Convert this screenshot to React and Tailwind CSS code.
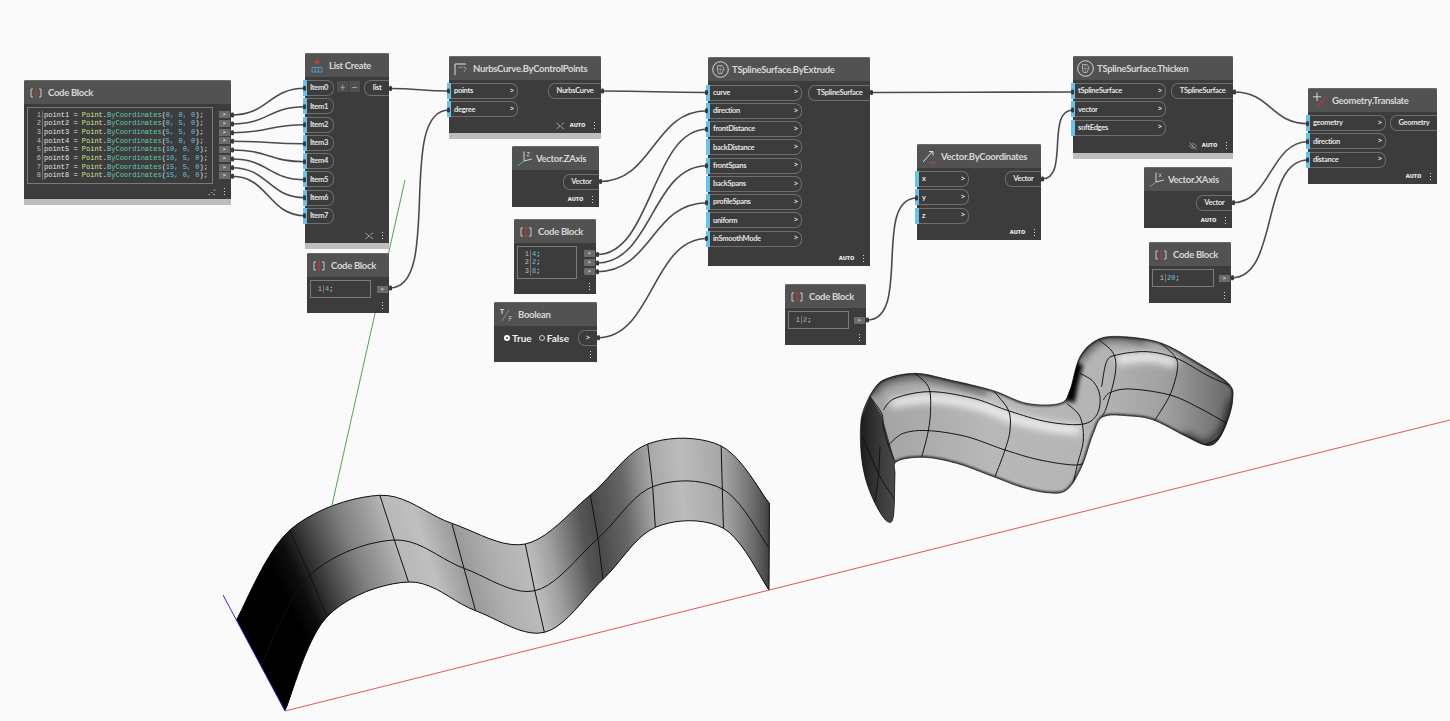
import React from "react";
import { EyeOff } from "lucide-react";

// catmull-rom through a list of points
const pointAt = (pts, u) => {
  const i = Math.min(Math.floor(u), pts.length - 2);
  const t = u - i;
  const p0 = pts[Math.max(i - 1, 0)];
  const p1 = pts[i];
  const p2 = pts[i + 1];
  const p3 = pts[Math.min(i + 2, pts.length - 1)];
  const f = (a, b, c, d) =>
    0.5 * (2 * b + (c - a) * t + (2 * a - 5 * b + 4 * c - d) * t * t + (3 * b - a - 3 * c + d) * t * t * t);
  return [f(p0[0], p1[0], p2[0], p3[0]), f(p0[1], p1[1], p2[1], p3[1])];
};

const smooth = (pts, close = false) => {
  const steps = (pts.length - 1) * 10;
  let d = "";
  for (let s = 0; s <= steps; s++) {
    const [x, y] = pointAt(pts, (s / steps) * (pts.length - 1));
    d += `${s === 0 ? "M" : "L"}${x.toFixed(1)} ${y.toFixed(1)} `;
  }
  return close ? d + "Z" : d;
};

// open surface: knots read off the picture, in zoomed coords
const toScreen = ([x, y]) => [200 + x * 0.38265, 420 + y / 3];
const topEdge = [[95, 600], [235, 330], [470, 226], [658, 310], [850, 372], [1020, 225], [1170, 72], [1362, 78], [1488, 250]].map(toScreen);
const midEdge = [[160, 735], [287, 465], [508, 360], [690, 445], [875, 512], [1040, 355], [1183, 200], [1365, 207], [1487, 383]].map(toScreen);
const lowEdge = [[222, 873], [332, 590], [545, 486], [720, 572], [900, 637], [1053, 478], [1190, 322], [1368, 325], [1487, 510]].map(toScreen);

const shadeStops = [
  [0, 0], [0.65, 0], [0.85, 14], [1, 40], [1.5, 128], [2, 184], [2.4, 192], [3, 154], [3.5, 176], [4, 188],
  [4.3, 160], [4.8, 85], [5, 74], [5.5, 102], [6, 168], [6.4, 188], [7, 165], [7.5, 112], [8, 60],
];

const shade = (u) => {
  for (let i = 0; i < shadeStops.length - 1; i++) {
    const [a, va] = shadeStops[i];
    const [b, vb] = shadeStops[i + 1];
    if (u <= b) {
      const v = Math.round(va + ((vb - va) * (u - a)) / (b - a));
      return `rgb(${v},${v},${v})`;
    }
  }
  return "rgb(60,60,60)";
};

// strips overlap the next one so no seam shows through
const strips = [];
for (let s = 0; s < 200; s++) {
  const u0 = (s / 200) * 8;
  const u1 = Math.min(((s + 3) / 200) * 8, 8);
  const a = pointAt(topEdge, u0);
  const b = pointAt(topEdge, u1);
  const c = pointAt(lowEdge, u1);
  const d = pointAt(lowEdge, u0);
  strips.push({ pts: [a, b, c, d].map((p) => p.join(",")).join(" "), fill: shade(u0) });
}

const OpenSurface = () => (
  <g>
    {strips.map((s, i) => (
      <polygon key={i} points={s.pts} fill={s.fill} />
    ))}
    <g fill="none" stroke="#111" strokeWidth="1">
      <path d={smooth(topEdge)} />
      <path d={smooth(midEdge)} />
      <path d={smooth(lowEdge)} />
      {topEdge.slice(1, 8).map((p, i) => (
        <path key={i} d={`M${p[0]} ${p[1]} L${midEdge[i + 1][0]} ${midEdge[i + 1][1]} L${lowEdge[i + 1][0]} ${lowEdge[i + 1][1]}`} />
      ))}
      <path d={`M${topEdge[8][0]} ${topEdge[8][1]} L${lowEdge[8][0]} ${lowEdge[8][1]}`} />
    </g>
  </g>
);

const blobOutline = [
  [90, 225], [130, 180], [225, 160], [330, 180], [460, 212], [560, 250], [660, 250], [690, 210], [720, 110], [775, 58],
  [850, 50], [960, 68], [1060, 120], [1165, 190], [1178, 240], [1160, 310], [1130, 365], [1095, 375], [1030, 345],
  [940, 300], [870, 288], [790, 290], [760, 340], [725, 440], [680, 510], [620, 518], [540, 500], [460, 470], [350, 430],
  [250, 412], [170, 425], [165, 470], [160, 590], [140, 603], [105, 550], [75, 470], [62, 380], [65, 290], [90, 225],
];
const blobPath = smooth(blobOutline, true);

const blobLines = [
  [[130, 270], [165, 235], [270, 215], [400, 235], [505, 272], [620, 305], [725, 313], [770, 285], [780, 230], [760, 185], [720, 160]],
  [[785, 200], [800, 125], [830, 105], [920, 95], [1010, 115], [1100, 165], [1165, 195]],
  [[145, 375], [190, 340], [265, 332], [380, 350], [495, 390], [600, 420], [710, 435], [750, 415]],
  [[790, 240], [810, 218], [870, 207], [990, 225], [1080, 265], [1160, 310]],
  [[225, 160], [265, 200], [272, 260], [265, 332], [245, 412]],
  [[460, 212], [505, 270], [510, 330], [495, 390], [465, 470]],
  [[680, 250], [720, 290], [730, 360], [712, 435], [695, 510]],
  [[775, 58], [820, 100], [826, 160], [800, 260], [785, 290]],
  [[960, 68], [1005, 110], [1012, 150], [990, 225], [945, 300]],
  [[1095, 375], [1140, 350], [1160, 310]],
  [[90, 230], [125, 280], [130, 320], [145, 375], [165, 425]],
  [[68, 350], [115, 460], [165, 540]],
  [[120, 380], [115, 470], [105, 545]],
];

const ThickSurface = () => (
  <g transform="translate(840 320) scale(0.3333)">
    <defs>
      <clipPath id="blob-clip">
        <path d={blobPath} />
      </clipPath>
      <linearGradient id="blob-base" x1="0" y1="0" x2="1" y2="0">
        <stop offset="0" stopColor="#a0a0a0" />
        <stop offset="0.35" stopColor="#b8b8b8" />
        <stop offset="0.65" stopColor="#b4b4b4" />
        <stop offset="0.82" stopColor="#a0a0a0" />
        <stop offset="1" stopColor="#666" />
      </linearGradient>
      <linearGradient id="blob-end" x1="0" y1="0" x2="1" y2="0">
        <stop offset="0" stopColor="#1c1c1c" />
        <stop offset="0.6" stopColor="#3c3c3c" />
        <stop offset="1" stopColor="#4a4a4a" />
      </linearGradient>
      <filter id="soft-12" filterUnits="userSpaceOnUse" x="0" y="0" width="1300" height="700">
        <feGaussianBlur stdDeviation="13" />
      </filter>
      <filter id="soft-6" filterUnits="userSpaceOnUse" x="0" y="0" width="1300" height="700">
        <feGaussianBlur stdDeviation="7" />
      </filter>
      <filter id="soft-3" filterUnits="userSpaceOnUse" x="0" y="0" width="1300" height="700">
        <feGaussianBlur stdDeviation="3" />
      </filter>
    </defs>
    <path d={blobPath} fill="url(#blob-base)" />
    <g clipPath="url(#blob-clip)">
      <path d={blobPath} fill="none" stroke="#000" strokeWidth="8" opacity="0.75" filter="url(#soft-3)" />
      <path d={smooth([[95, 225], [130, 185], [225, 165], [330, 185], [440, 215]])} fill="none" stroke="#000" strokeWidth="14" opacity="0.85" filter="url(#soft-12)" />
      <path d={smooth([[715, 120], [775, 60], [850, 52], [920, 62]])} fill="none" stroke="#000" strokeWidth="14" opacity="0.85" filter="url(#soft-12)" />
      <path d={smooth([[1030, 345], [1095, 375], [1150, 330], [1178, 240]])} fill="none" stroke="#111" strokeWidth="18" opacity="0.85" filter="url(#soft-12)" />
      <path d={smooth([[150, 250], [280, 235], [420, 258], [520, 295], [640, 322], [720, 330]])} fill="none" stroke="#fff" strokeWidth="22" filter="url(#soft-12)" />
      <path d={smooth([[830, 120], [930, 112], [1010, 130]])} fill="none" stroke="#fff" strokeWidth="22" filter="url(#soft-12)" />
      <path d={smooth([[715, 130], [700, 190], [690, 245]])} fill="none" stroke="#000" strokeWidth="30" filter="url(#soft-6)" />
      <path d="M62 300 L90 228 L125 285 L165 425 L168 600 L130 610 L60 480 Z" fill="url(#blob-end)" />
      <g fill="none" stroke="#111" strokeWidth="3">
        {blobLines.map((l, i) => (
          <path key={i} d={smooth(l)} />
        ))}
      </g>
    </g>
    <path d={blobPath} fill="none" stroke="#111" strokeWidth="2" />
  </g>
);

const Wire = ({ a, b, c, d }) => {
  const dx = c - a;
  // short hops with a big drop run nearly upright in the middle
  const m = Math.max(dx / 2, Math.min(Math.abs(d - b) * 0.4, dx * 0.9));
  return (
    <g>
      <path d={`M${a} ${b} C${a + m} ${b} ${c - m} ${d} ${c} ${d}`} fill="none" stroke="#4b4b4b" strokeWidth="1.6" />
      <rect x={a - 1} y={b - 2.5} width="3" height="5" rx="1.2" fill="#3a3a3a" />
      <rect x={c - 2} y={d - 2.5} width="3" height="5" rx="1.2" fill="#3a3a3a" />
    </g>
  );
};

const wires = [
  [232, 115, 305, 88.3], [232, 124, 305, 106.7], [232, 132.7, 305, 124.7], [232, 141.3, 305, 143.7],
  [232, 150, 305, 161.7], [232, 159, 305, 179.7], [232, 167.7, 305, 197.7], [232, 176.3, 305, 215.7],
  [390, 88.5, 449, 91], [390, 288, 449, 110], [602, 91, 707, 92.5], [600, 181.5, 707, 110.7],
  [597, 254.5, 707, 129.3], [597, 263, 707, 165.7], [597, 271.7, 707, 202.7], [598, 337.7, 707, 238.5],
  [871, 92.5, 1073, 92], [867, 320, 917, 198], [1042, 179, 1073, 110], [1234, 92, 1308, 123.7],
  [1233, 202.7, 1308, 141.7], [1232, 277.7, 1308, 160],
];

const CodeIcon = () => (
  <svg width="12" height="12" viewBox="0 0 12 12" fill="none">
    <path d="M3 2H1V10H3M9 2H11V10H9" stroke="#c8c8c8" strokeWidth="1" />
    <path d="M6 1V11" stroke="#c0392b" strokeWidth="1.2" />
  </svg>
);

const ListIcon = () => (
  <svg width="12" height="14" viewBox="0 0 12 14" fill="none">
    <path d="M6 0V6M3 3H9" stroke="#d9413a" strokeWidth="1" />
    <path d="M1 8.5H11V13H1ZM4.3 8.5V13M7.6 8.5V13" stroke="#4c9fd0" strokeWidth="0.9" />
  </svg>
);

const NurbsIcon = () => (
  <svg width="14" height="14" viewBox="0 0 14 14" fill="none">
    <path d="M1 13V2H12" stroke="#e0e0e0" strokeWidth="1" />
    <path d="M5 5.5C9 5 11 5 12 6C12 8 11 9 9 10" stroke="#d8d8d8" strokeWidth="0.7" strokeDasharray="1.5 1" />
  </svg>
);

const TSplineIcon = () => (
  <svg width="17" height="17" viewBox="0 0 17 17" fill="none">
    <circle cx="8.5" cy="8.5" r="7.8" stroke="#e6e6e6" strokeWidth="0.9" />
    <path d="M5.5 4.5H10L12 7.5L10 12.5H6.5L5.5 9.5Z" stroke="#d0d0d0" strokeWidth="0.7" />
    <path d="M5.5 8.5H11.5M8 4.5L8.5 12.5" stroke="#c9a0a0" strokeWidth="0.5" />
  </svg>
);

const AxisIcon = ({ mark }) => (
  <svg width="15" height="15" viewBox="0 0 15 15" fill="none">
    <path d="M7 0.5V10L15 8" stroke="#e0e0e0" strokeWidth="0.9" />
    <path d="M7 10L0.5 15" stroke="#5aa9d6" strokeWidth="1" />
    <path d={mark} stroke="#d0d0d0" strokeWidth="0.7" />
  </svg>
);

const VectorIcon = () => (
  <svg width="15" height="15" viewBox="0 0 15 15" fill="none">
    <path d="M1 13L10 3" stroke="#e0e0e0" strokeWidth="1" />
    <path d="M7 2.5H11V6.5" stroke="#e0e0e0" strokeWidth="1" />
    <path d="M8 13.5H14" stroke="#a8504a" strokeWidth="1.5" strokeDasharray="1.4 0.6" />
  </svg>
);

const BooleanIcon = () => (
  <div className="relative h-[14px] w-[12px] text-[7px] font-bold leading-none text-[#d8d8d8]">
    <span className="absolute left-0 top-0">T</span>
    <span className="absolute bottom-0 right-0 text-[#9a9a9a]">F</span>
    <svg className="absolute left-0 top-0" width="12" height="14" viewBox="0 0 12 14" fill="none">
      <path d="M2 13L9 2" stroke="#9a9a9a" strokeWidth="0.8" />
    </svg>
  </div>
);

const TranslateIcon = () => (
  <svg width="17" height="17" viewBox="0 0 17 17" fill="none">
    <path d="M5 0.5V9M0.8 4.8H9.2" stroke="#e6e6e6" strokeWidth="0.9" />
    <path d="M3.5 15.5L15 3.5M5.5 16L16 5.5" stroke="#a8443c" strokeWidth="1" />
  </svg>
);

const Dots = () => (
  <div className="flex flex-col gap-[1.5px]">
    <span className="h-[1.5px] w-[1.5px] bg-[#d8d8d8]" />
    <span className="h-[1.5px] w-[1.5px] bg-[#d8d8d8]" />
    <span className="h-[1.5px] w-[1.5px] bg-[#d8d8d8]" />
  </div>
);

const LacingIcon = () => (
  <svg width="9" height="8" viewBox="0 0 9 8" fill="none">
    <path d="M0.5 1L8 7M0.5 7L4 4M5.5 2.5L8 1" stroke="#cfcfcf" strokeWidth="0.7" />
  </svg>
);

const ScatterIcon = () => (
  <svg width="8" height="6" viewBox="0 0 8 6" fill="none">
    <path d="M0.5 5.5H2M3 3.5H4.5M5.5 1H7.5M5 5.5H7" stroke="#bdbdbd" strokeWidth="0.8" />
  </svg>
);

const Footer = ({ auto, glyph }) => (
  <div className="mt-auto flex h-[15px] items-center justify-end gap-[5px] pr-[6px]">
    {glyph}
    {auto && <span className="text-[5.5px] font-extrabold leading-none text-[#e8e8e8]">AUTO</span>}
    <span className="ml-[3px]">
      <Dots />
    </span>
  </div>
);

const Node = ({ box, title, icon, bar, footer, children }) => (
  <div className={`absolute flex flex-col rounded-t-[2px] bg-[#3c3c3c] ${box}`}>
    <div className="flex h-[24px] shrink-0 items-center rounded-t-[2px] border-t border-[#6a6a6a] bg-[#525252]">
      <div className="flex w-[24px] shrink-0 justify-center">{icon}</div>
      <span className="whitespace-nowrap pt-[1px] font-['Lato',sans-serif] text-[9.5px] font-bold tracking-[-0.3px] text-[#d8d8d8]">{title}</span>
    </div>
    <div className="flex min-h-0 flex-1 flex-col">
      {children}
      {footer}
    </div>
    {bar && <div className="h-[6px] shrink-0 bg-[#bdbdbd]" />}
  </div>
);

const portText = "font-['Lato',sans-serif] text-[7.5px] font-bold tracking-[-0.3px] text-[#e4e4e4]";

const InPort = ({ label, pill }) => (
  <div className="-ml-[2px] flex h-[16px] items-center">
    <span className="h-[16px] w-[4px] shrink-0 bg-[#6ac0e7]" />
    <div className={`flex h-[16px] items-center justify-between rounded-r-[7px] border border-l-0 border-[#6e6e6e] pl-[3px] pr-[3px] ${pill}`}>
      <span className={portText}>{label}</span>
      <span className="text-[7px] font-bold text-[#e4e4e4]">&gt;</span>
    </div>
  </div>
);

const OutPort = ({ label }) => (
  <div className="flex h-[16px] items-center justify-center rounded-l-[7px] border border-r-0 border-[#6e6e6e] px-[7.5px]">
    <span className={portText}>{label}</span>
  </div>
);

const Ports = ({ inputs, pill, output, outRowTop }) => (
  <div className={`flex items-start justify-between ${outRowTop}`}>
    <div className="flex flex-col gap-[2.25px]">
      {inputs.map((p) => (
        <InPort key={p} label={p} pill={pill} />
      ))}
    </div>
    {output && <OutPort label={output} />}
  </div>
);

const CodeOut = () => (
  <div className="flex h-[7px] w-[11px] items-center justify-center bg-[#6b6b6b] text-[5px] font-bold leading-none text-[#e8e8e8]">
    &gt;
  </div>
);

const CodeBox = ({ box, outs, minH, children }) => (
  <div className="mt-[3px] flex items-center pl-[3px] pr-[1px]">
    <div className={`flex items-center border border-[#7a7a7a] py-[2.5px] ${box} ${minH}`}>{children}</div>
    <div className="ml-auto flex flex-col gap-[1.7px]">
      {Array.from({ length: outs }).map((_, i) => (
        <CodeOut key={i} />
      ))}
    </div>
  </div>
);

const Gutter = ({ count, wide }) => (
  <div className={`flex shrink-0 flex-col border-r border-[#777] pr-[1px] text-right text-[#bdbdbd] ${wide}`}>
    {Array.from({ length: count }).map((_, i) => (
      <span key={i}>{i + 1}</span>
    ))}
  </div>
);

const MiniCode = ({ box, values, wide }) => (
  <CodeBox box={box} outs={values.length} minH="min-h-[18px]">
    <div className="flex font-['Liberation_Mono',monospace] text-[7px] leading-[8.7px]">
      <Gutter count={values.length} wide={wide} />
      <div className="flex flex-col pl-[1px]">
        {values.map((v, i) => (
          <span key={i}>
            <span className="text-[#6ac0e7]">{v}</span>
            <span className="text-[#e6e6e6]">;</span>
          </span>
        ))}
      </div>
    </div>
  </CodeBox>
);

const points = [
  [1, "0, 0, 0"], [2, "0, 5, 0"], [3, "5, 5, 0"], [4, "5, 0, 0"],
  [5, "10, 0, 0"], [6, "10, 5, 0"], [7, "15, 5, 0"], [8, "15, 0, 0"],
];

const extrudeInputs = ["curve", "direction", "frontDistance", "backDistance", "frontSpans", "backSpans", "profileSpans", "uniform", "inSmoothMode"];

export default function App() {
  return (
    <div className="relative h-[721px] w-[1450px] overflow-hidden bg-[#fafafa] font-['Open_Sans',sans-serif]">
      <svg className="absolute left-0 top-0" width="1450" height="721" viewBox="0 0 1450 721" fill="none">
        <path d="M405 180L332 505" stroke="#3f9a3f" strokeWidth="0.9" />
        <OpenSurface />
        <path d="M223 595L285 711" stroke="#2a2ac8" strokeWidth="1" />
        <path d="M285 711L1450 420" stroke="#e2555a" strokeWidth="1" />
        <ThickSurface />
      </svg>

      <Node box="left-[24px] top-[80px] h-[125px] w-[207px]" title="Code Block" icon={<CodeIcon />} bar footer={<Footer glyph={<ScatterIcon />} />}>
        <CodeBox box="w-[186px]" outs={8} minH="min-h-[76px]">
          <div className="flex font-['Liberation_Mono',monospace] text-[7px] leading-[8.7px]">
            <Gutter count={8} wide="w-[15px]" />
            <div className="flex flex-col pl-[1px]">
              {points.map(([n, v]) => (
                <span key={n} className="whitespace-pre text-[#e6e6e6]">
                  {`point${n} = `}
                  <span className="text-[#c6e88e]">Point</span>.<span className="text-[#66c9b4]">ByCoordinates</span>(
                  <span className="text-[#6ac0e7]">{v}</span>);
                </span>
              ))}
            </div>
          </div>
        </CodeBox>
      </Node>

      <Node box="left-[305px] top-[53px] h-[196px] w-[84px]" title="List Create" icon={<ListIcon />} bar footer={<Footer glyph={<LacingIcon />} />}>
        <div className="flex items-start pt-[3px]">
          <div className="flex flex-col gap-[2.25px]">
            {["Item0", "Item1", "Item2", "Item3", "Item4", "Item5", "Item6", "Item7"].map((p) => (
              <div key={p} className="-ml-[2px] flex h-[16px] items-center">
                <span className="h-[16px] w-[4px] bg-[#6ac0e7]" />
                <div className="flex h-[16px] w-[27px] items-center rounded-r-[7px] border border-l-0 border-[#6e6e6e] pl-[3px]">
                  <span className={portText}>{p}</span>
                </div>
              </div>
            ))}
          </div>
          <div className="ml-[3px] mt-[1px] flex gap-[1px]">
            <span className="flex h-[11px] w-[11px] items-center justify-center bg-[#4f4f4f] text-[10px] leading-none text-[#bbb]">+</span>
            <span className="flex h-[11px] w-[11px] items-center justify-center bg-[#4f4f4f] text-[10px] leading-none text-[#bbb]">−</span>
          </div>
          <div className="ml-auto">
            <OutPort label="list" />
          </div>
        </div>
      </Node>

      <Node box="left-[307px] top-[253px] h-[60px] w-[82px]" title="Code Block" icon={<CodeIcon />} footer={<Footer />}>
        <MiniCode box="w-[61px]" values={["4"]} wide="w-[13px]" />
      </Node>

      <Node box="left-[449px] top-[56px] h-[83px] w-[152px]" title="NurbsCurve.ByControlPoints" icon={<NurbsIcon />} bar footer={<Footer auto glyph={<LacingIcon />} />}>
        <Ports inputs={["points", "degree"]} pill="w-[67px]" output="NurbsCurve" outRowTop="pt-[3px]" />
      </Node>

      <Node box="left-[512px] top-[146px] h-[61px] w-[87px]" title="Vector.ZAxis" icon={<AxisIcon mark="M10 1.5H12.5L10 5H12.5" />} footer={<Footer auto />}>
        <div className="flex justify-end pt-[4px]">
          <OutPort label="Vector" />
        </div>
      </Node>

      <Node box="left-[514px] top-[219px] h-[75px] w-[82px]" title="Code Block" icon={<CodeIcon />} footer={<Footer />}>
        <MiniCode box="w-[60px]" values={["4", "2", "8"]} wide="w-[13px]" />
      </Node>

      <Node box="left-[494px] top-[302px] h-[60px] w-[103px]" title="Boolean" icon={<BooleanIcon />} footer={<Footer />}>
        <div className="flex items-center pl-[10px] pt-[4px]">
          <span className="h-[6px] w-[6px] rounded-full border-2 border-white" />
          <span className="ml-[2px] font-['Lato',sans-serif] text-[10px] font-bold leading-[16px] text-[#eee]">True</span>
          <span className="ml-[7px] h-[6px] w-[6px] rounded-full border border-[#ccc]" />
          <span className="ml-[2px] font-['Lato',sans-serif] text-[10px] font-bold leading-[16px] text-[#eee]">False</span>
          <div className="ml-auto flex h-[16px] w-[19px] items-center justify-center rounded-l-[7px] border border-r-0 border-[#6e6e6e] text-[7px] font-bold text-[#e4e4e4]">
            &gt;
          </div>
        </div>
      </Node>

      <Node box="left-[708px] top-[57px] h-[209px] w-[162px]" title="TSplineSurface.ByExtrude" icon={<TSplineIcon />} footer={<Footer auto />}>
        <Ports inputs={extrudeInputs} pill="w-[92px]" output="TSplineSurface" outRowTop="pt-[3.5px]" />
      </Node>

      <Node box="left-[785px] top-[284px] h-[61px] w-[81px]" title="Code Block" icon={<CodeIcon />} footer={<Footer />}>
        <MiniCode box="w-[61px]" values={["2"]} wide="w-[13px]" />
      </Node>

      <Node box="left-[917px] top-[144px] h-[96px] w-[124px]" title="Vector.ByCoordinates" icon={<VectorIcon />} footer={<Footer auto />}>
        <Ports inputs={["x", "y", "z"]} pill="w-[50px]" output="Vector" outRowTop="pt-[3px]" />
      </Node>

      <Node box="left-[1073px] top-[56px] h-[103px] w-[160px]" title="TSplineSurface.Thicken" icon={<TSplineIcon />} bar footer={<Footer auto glyph={<EyeOff size={8} color="#cfcfcf" strokeWidth={1.5} />} />}>
        <Ports inputs={["tSplineSurface", "vector", "softEdges"]} pill="w-[91px]" output="TSplineSurface" outRowTop="pt-[3px]" />
      </Node>

      <Node box="left-[1144px] top-[167px] h-[61px] w-[88px]" title="Vector.XAxis" icon={<AxisIcon mark="M10 1.5L12.5 5M12.5 1.5L10 5" />} footer={<Footer auto />}>
        <div className="flex justify-end pt-[4px]">
          <OutPort label="Vector" />
        </div>
      </Node>

      <Node box="left-[1149px] top-[242px] h-[61px] w-[82px]" title="Code Block" icon={<CodeIcon />} footer={<Footer />}>
        <MiniCode box="w-[62px]" values={["20"]} wide="w-[13px]" />
      </Node>

      <Node box="left-[1308px] top-[88px] h-[96px] w-[129px]" title="Geometry.Translate" icon={<TranslateIcon />} footer={<Footer auto />}>
        <Ports inputs={["geometry", "direction", "distance"]} pill="w-[76px]" output="Geometry" outRowTop="pt-[3px]" />
      </Node>

      <svg className="pointer-events-none absolute left-0 top-0" width="1450" height="721" viewBox="0 0 1450 721" fill="none">
        {wires.map(([a, b, c, d], i) => (
          <Wire key={i} a={a} b={b} c={c} d={d} />
        ))}
      </svg>
    </div>
  );
}
